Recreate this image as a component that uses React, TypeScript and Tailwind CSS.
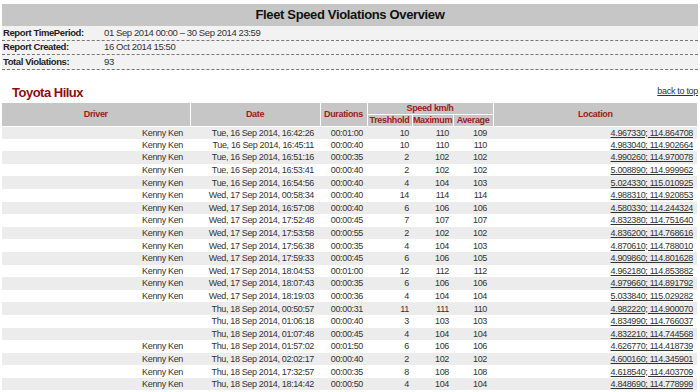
const rows: [string, string, string, number, number, number, string][] = [
  ["Kenny Ken", "Tue, 16 Sep 2014, 16:42:26", "00:01:00", 10, 110, 109, "4.967330; 114.864708"],
  ["Kenny Ken", "Tue, 16 Sep 2014, 16:45:11", "00:00:40", 10, 110, 110, "4.983040; 114.902664"],
  ["Kenny Ken", "Tue, 16 Sep 2014, 16:51:16", "00:00:35", 2, 102, 102, "4.990260; 114.970078"],
  ["Kenny Ken", "Tue, 16 Sep 2014, 16:53:41", "00:00:40", 2, 102, 102, "5.008890; 114.999962"],
  ["Kenny Ken", "Tue, 16 Sep 2014, 16:54:56", "00:00:40", 4, 104, 103, "5.024330; 115.010925"],
  ["Kenny Ken", "Wed, 17 Sep 2014, 00:58:34", "00:00:40", 14, 114, 114, "4.988310; 114.920853"],
  ["Kenny Ken", "Wed, 17 Sep 2014, 16:57:08", "00:00:40", 6, 106, 106, "4.580330; 114.244324"],
  ["Kenny Ken", "Wed, 17 Sep 2014, 17:52:48", "00:00:45", 7, 107, 107, "4.832380; 114.751640"],
  ["Kenny Ken", "Wed, 17 Sep 2014, 17:53:58", "00:00:55", 2, 102, 102, "4.836200; 114.768616"],
  ["Kenny Ken", "Wed, 17 Sep 2014, 17:56:38", "00:00:35", 4, 104, 103, "4.870610; 114.788010"],
  ["Kenny Ken", "Wed, 17 Sep 2014, 17:59:33", "00:00:45", 6, 106, 105, "4.909860; 114.801628"],
  ["Kenny Ken", "Wed, 17 Sep 2014, 18:04:53", "00:01:00", 12, 112, 112, "4.962180; 114.853882"],
  ["Kenny Ken", "Wed, 17 Sep 2014, 18:07:43", "00:00:35", 6, 106, 106, "4.979660; 114.891792"],
  ["Kenny Ken", "Wed, 17 Sep 2014, 18:19:03", "00:00:36", 4, 104, 104, "5.033840; 115.029282"],
  ["", "Thu, 18 Sep 2014, 00:50:57", "00:00:31", 11, 111, 110, "4.982220; 114.900070"],
  ["", "Thu, 18 Sep 2014, 01:06:18", "00:00:40", 3, 103, 103, "4.834990; 114.766037"],
  ["", "Thu, 18 Sep 2014, 01:07:48", "00:00:45", 4, 104, 104, "4.832210; 114.744568"],
  ["Kenny Ken", "Thu, 18 Sep 2014, 01:57:02", "00:01:50", 6, 106, 106, "4.626770; 114.418739"],
  ["Kenny Ken", "Thu, 18 Sep 2014, 02:02:17", "00:00:40", 2, 102, 102, "4.600160; 114.345901"],
  ["Kenny Ken", "Thu, 18 Sep 2014, 17:32:57", "00:00:35", 8, 108, 108, "4.618540; 114.403709"],
  ["Kenny Ken", "Thu, 18 Sep 2014, 18:14:42", "00:00:50", 4, 104, 104, "4.848690; 114.778999"],
];

const info: [string, string][] = [
  ["Report TimePeriod:", "01 Sep 2014 00:00 – 30 Sep 2014 23:59"],
  ["Report Created:", "16 Oct 2014 15:50"],
  ["Total Violations:", "93"],
];

const th = "border border-white bg-[#c6c6c6] text-center font-bold text-[#9a1b1b] p-0";

export default function App() {
  return (
    <div className="h-[392px] w-[700px] overflow-hidden bg-white px-[2px] pt-[4px] font-['Liberation_Sans',Arial,sans-serif] text-[#333]">
      <div className="flex h-[22px] items-center justify-center bg-[#c6c6c6] text-[13px] font-bold tracking-[-0.35px] text-[#111]">
        Fleet Speed Violations Overview
      </div>

      <div className="bg-[#f2f2f2]">
        {info.map(([label, value]) => (
          <div
            key={label}
            className="flex h-[14.5px] items-center border-b border-dashed border-[#777] pl-[1px] text-[9.5px] tracking-[-0.4px]"
          >
            <span className="w-[101px] font-bold text-[#222]">{label}</span>
            <span className="text-[#333]">{value}</span>
          </div>
        ))}
      </div>

      <div className="mt-[15px] flex h-[16px] items-center justify-between">
        <h2 className="pl-[10px] text-[13px] font-bold tracking-[-0.5px] text-[#8a0f0f]">Toyota Hilux</h2>
        <a href="#top" className="mt-[-2px] text-[9px] tracking-[-0.3px] text-[#333] underline">
          back to top
        </a>
      </div>

      <table className="mt-[1px] w-[695px] table-fixed border-collapse text-[9px] leading-[10px] tracking-[-0.35px]">
        <colgroup>
          <col className="w-[188px]" />
          <col className="w-[130px]" />
          <col className="w-[47px]" />
          <col className="w-[45px]" />
          <col className="w-[41px]" />
          <col className="w-[40px]" />
          <col className="w-[204px]" />
        </colgroup>
        <thead>
          <tr className="h-[12px]">
            <th rowSpan={2} className={`${th} border-l-0`}>Driver</th>
            <th rowSpan={2} className={th}>Date</th>
            <th rowSpan={2} className={th}>Durations</th>
            <th colSpan={3} className={th}>Speed km/h</th>
            <th rowSpan={2} className={`${th} border-r-0`}>Location</th>
          </tr>
          <tr className="h-[12px]">
            <th className={th}>Treshhold</th>
            <th className={th}>Maximum</th>
            <th className={th}>Average</th>
          </tr>
        </thead>
        <tbody>
          {rows.map((r, i) => (
            <tr key={r[1]} className={`h-[12.6px] ${i % 2 === 0 ? "bg-[#ececec]" : "bg-white"}`}>
              <td className="p-0 pr-[7px] text-right">{r[0]}</td>
              <td className="p-0 pr-[6px] text-right">{r[1]}</td>
              <td className="p-0 pr-[4px] text-right">{r[2]}</td>
              <td className="p-0 pr-[3px] text-right">{r[3]}</td>
              <td className="p-0 pr-[4px] text-right">{r[4]}</td>
              <td className="p-0 pr-[6px] text-right">{r[5]}</td>
              <td className="p-0 pr-[4px] text-right">
                <a href="#map" className="text-[#333] underline">
                  {r[6]}
                </a>
              </td>
            </tr>
          ))}
        </tbody>
      </table>
    </div>
  );
}
